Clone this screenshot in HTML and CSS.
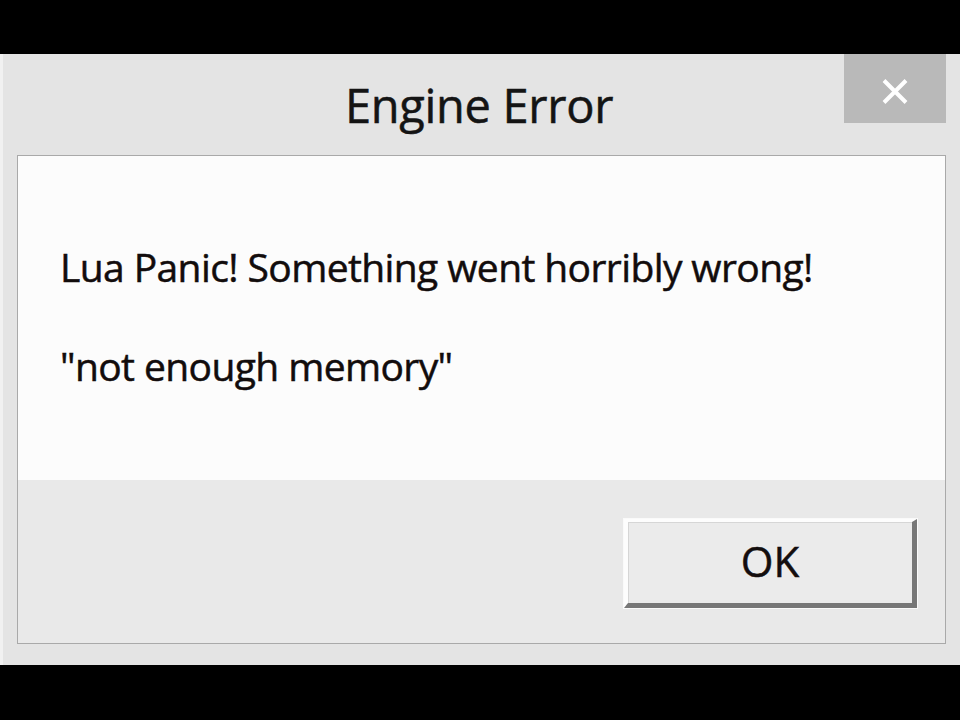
FILE: index.html
```html
<!DOCTYPE html>
<html>
<head>
<meta charset="utf-8">
<link rel="stylesheet" href="styles.css">
<title>Engine Error</title>
</head>
<body>
<div class="screen">
  <div class="bar"></div>
  <div class="window">
    <div class="titlebar">
      <div class="title">Engine Error</div>
      <button class="close" aria-label="Close">
        <svg width="26" height="25" viewBox="0 0 26 25"><path d="M2 1.5 L24 23.5 M24 1.5 L2 23.5" stroke="#fff" stroke-width="4" fill="none"/></svg>
      </button>
    </div>
    <div class="panel">
      <div class="message">
        <p class="line">Lua Panic! Something went horribly wrong!</p>
        <p class="line">"not enough memory"</p>
      </div>
      <div class="footer">
        <button class="ok">OK</button>
      </div>
    </div>
  </div>
  <div class="bar bar-bottom"></div>
</div>
</body>
</html>
```
FILE: styles.css
```css
html, body {
  margin: 0;
  padding: 0;
  background: #000;
}
.screen {
  width: 960px;
  height: 720px;
  display: flex;
  flex-direction: column;
  font-family: "Open Sans", "Noto Sans", sans-serif;
}
.bar {
  height: 54px;
  background: #000;
  flex: none;
}
.bar-bottom {
  height: 55px;
}
.window {
  height: 611px;
  flex: none;
  background: #e4e4e4;
  box-shadow: inset 3px 0 0 #f1f1f1;
  display: flex;
  flex-direction: column;
  padding: 0 14px 21px 17px;
  box-sizing: border-box;
}
.titlebar {
  height: 101px;
  flex: none;
  position: relative;
  display: flex;
  justify-content: center;
}
.title {
  font-size: 47px;
  color: #141414;
  margin-top: 51px;
  line-height: 0;
  margin-left: -5px;
  letter-spacing: -0.3px;
  -webkit-text-stroke: 0.5px #141414;
}
.close {
  position: absolute;
  top: 0;
  right: 0;
  width: 102px;
  height: 69px;
  background: #b9b9b9;
  border: 0;
  padding: 0;
  margin: 0;
  display: flex;
  align-items: center;
  justify-content: center;
}
.close svg {
  margin-top: 5px;
}
.panel {
  flex: 1;
  display: flex;
  flex-direction: column;
  border: 1px solid #a9a9a9;
  background: #e9e9e9;
}
.message {
  height: 324px;
  background: #fcfcfc;
  padding: 0 0 0 42px;
  box-sizing: border-box;
}
.line {
  margin: 0;
  font-size: 39px;
  color: #120c0c;
  line-height: 0;
  letter-spacing: -0.6px;
  -webkit-text-stroke: 0.5px #120c0c;
}
.line:first-child {
  padding-top: 111px;
}
.line + .line {
  padding-top: 99px;
}
.footer {
  flex: 1;
  display: flex;
  justify-content: flex-end;
  align-items: flex-start;
  padding: 39px 28px 0 0;
}
.ok {
  width: 293px;
  height: 89px;
  box-sizing: border-box;
  background: #ebebeb;
  border-style: solid;
  border-width: 3px 5px 5px 4px;
  border-color: #fdfdfd #777 #777 #fdfdfd;
  box-shadow: inset 1px 1px 0 #d6d6d6, 0 0 0 1px #fafafa;
  font-family: "Open Sans", "Noto Sans", sans-serif;
  font-size: 42px;
  color: #140e0e;
  -webkit-text-stroke: 0.5px #140e0e;
  padding: 0 0 4px;
  line-height: 1;
}
```
